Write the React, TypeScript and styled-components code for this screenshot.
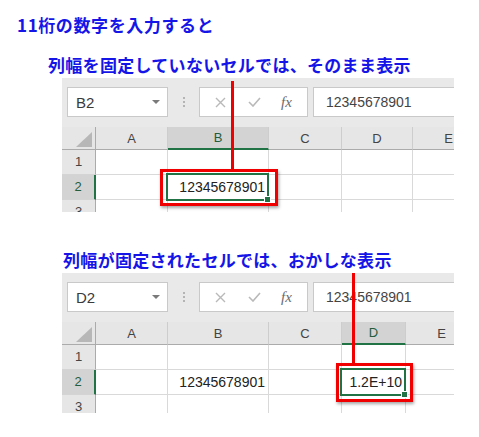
import React from 'react';
import styled, { createGlobalStyle } from 'styled-components';

const GlobalStyle = createGlobalStyle`
  html, body {
    margin: 0;
    padding: 0;
    background: #fff;
  }
  body {
    font-family: 'Liberation Sans', Arial, sans-serif;
  }
`;

const Page = styled.main`
  width: 479px;
  height: 437px;
  overflow: hidden;
  box-sizing: border-box;
  padding-top: 13px;
  display: flex;
  flex-direction: column;
`;

const Title = styled.h1`
  margin: 0 0 0 17px;
  font: 700 17px/24px 'Noto Sans CJK JP', sans-serif;
  letter-spacing: 0.6px;
  color: #1515e8;
`;

const Caption = styled.h2<{ $indent: number; $gap: number }>`
  margin: ${(p) => p.$gap}px 0 1px ${(p) => p.$indent}px;
  font: 700 17px/24px 'Noto Sans CJK JP', sans-serif;
  letter-spacing: 0.3px;
  color: #1515e8;
`;

const Panel = styled.section<{ $height: number }>`
  position: relative;
  margin-left: 62px;
  width: 392px;
  height: ${(p) => p.$height}px;
`;

const Frame = styled.div`
  width: 100%;
  height: 100%;
  overflow: hidden;
  display: flex;
  flex-direction: column;
`;

/* ---------- formula bar ---------- */

const Toolbar = styled.div`
  flex: 0 0 49px;
  box-sizing: border-box;
  padding: 9px 0 0 5px;
  background: #e9e9e9;
  display: flex;
  align-items: flex-start;
`;

const NameBox = styled.div`
  flex: 0 0 101px;
  height: 30px;
  box-sizing: border-box;
  border: 1px solid #c9c9c9;
  background: #fff;
  display: flex;
  align-items: center;
  justify-content: space-between;
  padding: 0 7px 0 8px;
  font-size: 15px;
  color: #3a3a3a;
`;

const Caret = styled.span`
  width: 0;
  height: 0;
  border-left: 4px solid transparent;
  border-right: 4px solid transparent;
  border-top: 4px solid #7a7a7a;
`;

const Grip = styled.div`
  flex: 0 0 31px;
  height: 30px;
  display: flex;
  flex-direction: column;
  align-items: center;
  justify-content: center;
  gap: 2px;

  span {
    width: 2px;
    height: 2px;
    background: #b4b4b4;
  }
`;

const FxButtons = styled.div`
  flex: 0 0 109px;
  height: 30px;
  box-sizing: border-box;
  border: 1px solid #c9c9c9;
  background: #fff;
  display: grid;
  grid-template-columns: 40px 28px 1fr;
  align-items: center;
  justify-items: center;
`;

const FxLabel = styled.span`
  font: italic 15px 'Liberation Serif', serif;
  color: #6b6b6b;
  padding-right: 2px;
`;

const FormulaInput = styled.div`
  flex: 1;
  margin: 0 -2px 0 5px;
  height: 30px;
  box-sizing: border-box;
  border: 1px solid #c9c9c9;
  background: #fff;
  display: flex;
  align-items: center;
  padding-left: 12px;
  font-size: 14px;
  color: #444;
`;

/* ---------- sheet grid ---------- */

const Grid = styled.div<{ $cols: number[] }>`
  flex: 1;
  display: grid;
  grid-template-columns: 34px ${(p) => p.$cols.map((c) => `${c}px`).join(' ')};
  grid-template-rows: 23px 25px 25px 1fr;
  background: #fff;
`;

const Corner = styled.div`
  background: #e6e6e6;
  border-right: 1px solid #ababab;
  border-bottom: 1px solid #ababab;
  display: flex;
  justify-content: flex-end;
  align-items: flex-end;
  padding: 0 3px 2px 0;

  &::after {
    content: '';
    width: 0;
    height: 0;
    border-left: 16px solid transparent;
    border-bottom: 15px solid #b7b7b7;
  }
`;

const ColHead = styled.div<{ $active?: boolean }>`
  background: ${(p) => (p.$active ? '#d3d3d3' : '#e6e6e6')};
  border-right: 1px solid #cdcdcd;
  border-bottom: ${(p) => (p.$active ? '2px solid #217346' : '1px solid #ababab')};
  display: flex;
  align-items: center;
  justify-content: center;
  font-size: 13px;
  color: ${(p) => (p.$active ? '#245c3c' : '#444')};
`;

const RowHead = styled.div<{ $active?: boolean }>`
  background: ${(p) => (p.$active ? '#d3d3d3' : '#e6e6e6')};
  border-right: ${(p) => (p.$active ? '2px solid #217346' : '1px solid #ababab')};
  border-bottom: 1px solid #d4d4d4;
  display: flex;
  align-items: flex-start;
  justify-content: center;
  line-height: 24px;
  font-size: 13px;
  color: ${(p) => (p.$active ? '#245c3c' : '#444')};
`;

const Cell = styled.div`
  position: relative;
  border-right: 1px solid #d9d9d9;
  border-bottom: 1px solid #d9d9d9;
  text-align: right;
  padding-right: 3px;
  line-height: 24px;
  font-size: 14px;
  color: #222;
  white-space: nowrap;
`;

const Selection = styled.div`
  position: absolute;
  z-index: 2;
  top: -2px;
  left: -2px;
  right: -1px;
  bottom: -2px;
  border: 2px solid #217346;

  &::after {
    content: '';
    position: absolute;
    right: -4px;
    bottom: -4px;
    width: 5px;
    height: 5px;
    background: #217346;
    border: 1px solid #fff;
  }
`;

/* ---------- red callouts ---------- */

const CalloutLine = styled.div<{ $x: number; $y: number; $h: number }>`
  position: absolute;
  z-index: 5;
  left: ${(p) => p.$x}px;
  top: ${(p) => p.$y}px;
  width: 3px;
  height: ${(p) => p.$h}px;
  background: #f00000;
`;

const CalloutBox = styled.div<{ $x: number; $y: number; $w: number; $h: number }>`
  position: absolute;
  z-index: 5;
  left: ${(p) => p.$x}px;
  top: ${(p) => p.$y}px;
  width: ${(p) => p.$w}px;
  height: ${(p) => p.$h}px;
  box-sizing: border-box;
  border: 3px solid #f00000;
  box-shadow: 1px 2px 3px rgba(0, 0, 0, 0.35);
`;

type Callout = { lineX: number; lineY: number; lineH: number; x: number; y: number; w: number; h: number };

type SheetProps = {
  name: string;
  formula: string;
  cols: number[];
  selCol: number;
  height: number;
  values: Record<string, string>;
  callout: Callout;
};

const LETTERS = ['A', 'B', 'C', 'D', 'E'];

const Sheet = ({ name, formula, cols, selCol, height, values, callout }: SheetProps) => (
  <Panel $height={height}>
    <Frame>
      <Toolbar>
        <NameBox>
          {name}
          <Caret />
        </NameBox>
        <Grip>
          <span />
          <span />
          <span />
        </Grip>
        <FxButtons>
          <svg width='11' height='11' viewBox='0 0 11 11'>
            <path d='M1 1 L10 10 M10 1 L1 10' stroke='#b9b9b9' strokeWidth='1.4' />
          </svg>
          <svg width='13' height='10' viewBox='0 0 13 10'>
            <path d='M1 5 L5 9 L12 1' stroke='#b9b9b9' strokeWidth='1.6' fill='none' />
          </svg>
          <FxLabel>fx</FxLabel>
        </FxButtons>
        <FormulaInput>{formula}</FormulaInput>
      </Toolbar>

      <Grid $cols={cols}>
        <Corner />
        {LETTERS.map((l, i) => (
          <ColHead key={l} $active={i === selCol}>
            {l}
          </ColHead>
        ))}
        {[1, 2, 3].map((r) => (
          <React.Fragment key={r}>
            <RowHead $active={r === 2}>{r}</RowHead>
            {LETTERS.map((l, i) => (
              <Cell key={l}>
                {values[`${l}${r}`]}
                {r === 2 && i === selCol && <Selection />}
              </Cell>
            ))}
          </React.Fragment>
        ))}
      </Grid>
    </Frame>

    <CalloutLine $x={callout.lineX} $y={callout.lineY} $h={callout.lineH} />
    <CalloutBox $x={callout.x} $y={callout.y} $w={callout.w} $h={callout.h} />
  </Panel>
);

export default function App() {
  return (
    <>
      <GlobalStyle />
      <Page>
        <Title>11桁の数字を入力すると</Title>

        <Caption $indent={48} $gap={16}>
          列幅を固定していないセルでは、そのまま表示
        </Caption>
        <Sheet
          name='B2'
          formula='12345678901'
          cols={[72, 101, 73, 71, 72]}
          selCol={1}
          height={134}
          values={{ B2: '12345678901' }}
          callout={{ lineX: 169, lineY: 3, lineH: 88, x: 98, y: 91, w: 118, h: 37 }}
        />

        <Caption $indent={63} $gap={36}>
          列幅が固定されたセルでは、おかしな表示
        </Caption>
        <Sheet
          name='D2'
          formula='12345678901'
          cols={[72, 101, 73, 64, 72]}
          selCol={3}
          height={140}
          values={{ B2: '12345678901', D2: '1.2E+10' }}
          callout={{ lineX: 290, lineY: 0, lineH: 90, x: 274, y: 90, w: 77, h: 39 }}
        />
      </Page>
    </>
  );
}
